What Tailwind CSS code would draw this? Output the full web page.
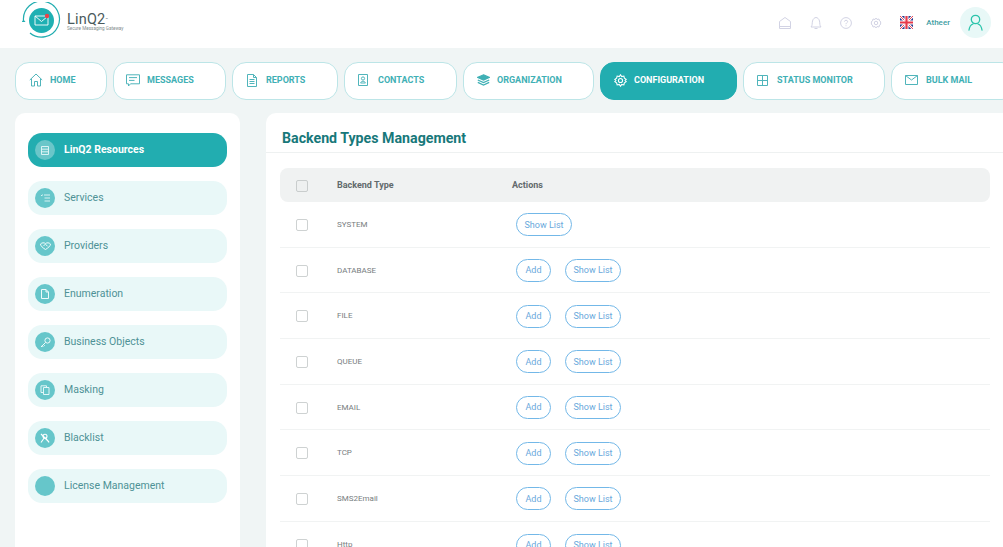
<!DOCTYPE html>
<html><head><meta charset="utf-8"><script src="https://cdn.jsdelivr.net/npm/@tailwindcss/browser@4"></script></head>
<body class="m-0">
<div class="w-[1003px] h-[547px] overflow-hidden bg-[#f0f5f5] font-['Roboto',sans-serif]">
<header class="h-[48px] bg-white flex items-center relative">
  <div class="flex items-center ml-[22px] -mt-[4px]">
    <svg width="40" height="40" viewBox="0 0 40 40" class="shrink-0">
      <path d="M1.5 18.5 A18 18 0 1 1 8 31" fill="none" stroke="#22adb0" stroke-width="1.2"/>
      <path d="M-0.5 20 L1.5 17.5 L3.5 20 Z" fill="#22adb0"/>
      <circle cx="19.5" cy="18.5" r="12.5" fill="#1fb0b3"/>
      <path d="M13 14 H26 V23 H13 Z M13 14 L19.5 19.5 L26 14" fill="none" stroke="#fff" stroke-width="0.9"/>
      <circle cx="25" cy="14" r="2.2" fill="#e8434a"/>
    </svg>
    <div class="ml-[5px] relative">
      <div class="text-[14.5px] leading-[16px] text-[#4a5a5c] tracking-[0.2px]">LinQ2<span class="text-[4px] align-top">™</span></div>
      <div class="text-[4.6px] leading-[6px] -mt-[2px] text-[#7f8c8d]">Secure Messaging Gateway</div>
    </div>
  </div>
  <div class="ml-auto flex items-center mr-[12px] -mt-[3px]">
    <svg width="14" height="14" viewBox="0 0 14 14" fill="none" stroke="#d2d3e4" stroke-width="1"><path d="M1.5 12.5 V5.5 L7 1.5 L12.5 5.5 V12.5 Z M1.5 10.5 H12.5"/></svg>
    <svg class="ml-[18px]" width="12" height="14" viewBox="0 0 12 14" fill="none" stroke="#d2d3e4" stroke-width="1"><path d="M1 11 C2.5 9.5 2 7.5 2.5 5 C3 3 4.5 1.5 6 1.5 C7.5 1.5 9 3 9.5 5 C10 7.5 9.5 9.5 11 11 Z M4.5 12.5 H7.5"/></svg>
    <svg class="ml-[18px]" width="12" height="12" viewBox="0 0 12 12" fill="none" stroke="#d2d3e4" stroke-width="1"><circle cx="6" cy="6" r="5.4"/><path d="M4.4 4.6 C4.5 2.8 7.6 2.8 7.6 4.6 C7.6 5.8 6 5.8 6 7.2 M6 8.3 V9.2"/></svg>
    <svg class="ml-[18px]" width="12" height="12" viewBox="0 0 24 24" fill="none" stroke="#d2d3e4" stroke-width="2"><path d="M12 2 L14 5 L18 4 L19 8 L22 10 L20.5 12 L22 14 L19 16 L18 20 L14 19 L12 22 L10 19 L6 20 L5 16 L2 14 L3.5 12 L2 10 L5 8 L6 4 L10 5 Z"/><circle cx="12" cy="12" r="3.5"/></svg>
    <svg class="ml-[18px]" width="13" height="13" viewBox="0 0 13 13"><rect width="13" height="13" fill="#2b3a8c"/><path d="M0 0 L13 13 M13 0 L0 13" stroke="#fff" stroke-width="2.4"/><path d="M0 0 L13 13 M13 0 L0 13" stroke="#e6394a" stroke-width="0.9"/><path d="M6.5 0 V13 M0 6.5 H13" stroke="#fff" stroke-width="4"/><path d="M6.5 0 V13 M0 6.5 H13" stroke="#e6394a" stroke-width="2.2"/></svg>
    <span class="ml-[13px] text-[8px] font-medium text-[#3f9da3]">Atheer</span>
    <div class="ml-[10px] w-[31px] h-[31px] rounded-full bg-[#e8f8f7] flex items-center justify-center">
      <svg width="15" height="17" viewBox="0 0 15 17" fill="none" stroke="#2bc4ab" stroke-width="1.3" stroke-linecap="round"><circle cx="7.5" cy="5.5" r="4.2"/><path d="M1 16 C1.5 12.5 3.5 10.5 5 10 M14 16 C13.5 12.5 11.5 10.5 10 10"/></svg>
    </div>
  </div>
</header>

<nav class="flex gap-[6px] pl-[15px] pt-[14px] text-[9px] font-bold w-[1100px]">
  <div class="w-[92px] h-[38px] shrink-0 rounded-[14px] border border-[#bce5e7] bg-white text-[#3fb0b5] flex items-center pl-[13px]">
    <svg class="shrink-0 -translate-y-[1px]" width="14" height="14" viewBox="0 0 14 14" fill="none" stroke="#50b5bb" stroke-width="1"><path d="M0.8 7 L7 1 L13.2 7 M2.5 5.8 V13 H5.5 V8.5 H8.5 V13 H11.5 V5.8"/></svg>
    <span class="ml-[7px]">HOME</span>
  </div>
  <div class="w-[113px] h-[38px] shrink-0 rounded-[14px] border border-[#bce5e7] bg-white text-[#3fb0b5] flex items-center pl-[12px]">
    <svg class="shrink-0 -translate-y-[1px]" width="14" height="13" viewBox="0 0 14 13" fill="none" stroke="#50b5bb" stroke-width="1"><path d="M0.5 0.8 H13.5 V9.8 H4.5 L2.5 12 V9.8 H0.5 Z M3 3.6 H11 M3 6.4 H8.5"/></svg>
    <span class="ml-[7px]">MESSAGES</span>
  </div>
  <div class="w-[106px] h-[38px] shrink-0 rounded-[14px] border border-[#bce5e7] bg-white text-[#3fb0b5] flex items-center pl-[14px]">
    <svg class="shrink-0 -translate-y-[1px]" width="10" height="13" viewBox="0 0 10 13" fill="none" stroke="#50b5bb" stroke-width="1"><path d="M0.5 0.5 H6.5 L9.5 3.5 V12.5 H0.5 Z M6.5 0.5 V3.5 H9.5 M2.5 5.5 H7.5 M2.5 7.5 H7.5 M2.5 9.5 H7.5"/></svg>
    <span class="ml-[9px]">REPORTS</span>
  </div>
  <div class="w-[113px] h-[38px] shrink-0 rounded-[14px] border border-[#bce5e7] bg-white text-[#3fb0b5] flex items-center pl-[13px]">
    <svg class="shrink-0 -translate-y-[1px]" width="10" height="12" viewBox="0 0 10 12" fill="none" stroke="#50b5bb" stroke-width="1"><path d="M0.5 0.5 H9.5 V11.5 H0.5 Z"/><circle cx="5" cy="4.5" r="1.6"/><path d="M2.6 9 C3 6.8 7 6.8 7.4 9 Z"/></svg>
    <span class="ml-[10px]">CONTACTS</span>
  </div>
  <div class="w-[131px] h-[38px] shrink-0 rounded-[14px] border border-[#bce5e7] bg-white text-[#3fb0b5] flex items-center pl-[13px]">
    <svg class="shrink-0 -translate-y-[1px]" width="13" height="12" viewBox="0 0 13 12" fill="none" stroke="#3fb0b5" stroke-width="1.2"><path d="M6.5 0.8 L12.2 3.4 L6.5 6 L0.8 3.4 Z" fill="#3fb0b5"/><path d="M0.8 6 L6.5 8.6 L12.2 6 M0.8 8.4 L6.5 11 L12.2 8.4"/></svg>
    <span class="ml-[7px]">ORGANIZATION</span>
  </div>
  <div class="w-[137px] h-[38px] shrink-0 rounded-[14px] border border-[#22adb0] bg-[#22adb0] text-white flex items-center pl-[13px]">
    <svg class="shrink-0 -translate-y-[1px]" width="13" height="13" viewBox="0 0 24 24" fill="none" stroke="#fff" stroke-width="2"><path d="M12 1.5 L14.2 4.8 L18.2 3.8 L19.2 7.8 L22.5 10 L20.5 12 L22.5 14 L19.2 16.2 L18.2 20.2 L14.2 19.2 L12 22.5 L9.8 19.2 L5.8 20.2 L4.8 16.2 L1.5 14 L3.5 12 L1.5 10 L4.8 7.8 L5.8 3.8 L9.8 4.8 Z"/><circle cx="12" cy="12" r="3.8"/></svg>
    <span class="ml-[7px]">CONFIGURATION</span>
  </div>
  <div class="w-[142px] h-[38px] shrink-0 rounded-[14px] border border-[#bce5e7] bg-white text-[#3fb0b5] flex items-center pl-[13px]">
    <svg class="shrink-0 -translate-y-[1px]" width="11" height="11" viewBox="0 0 11 11" fill="none" stroke="#50b5bb" stroke-width="1"><path d="M0.5 0.5 H10.5 V10.5 H0.5 Z M5.5 0.5 V10.5 M0.5 5.5 H10.5"/></svg>
    <span class="ml-[9px]">STATUS MONITOR</span>
  </div>
  <div class="w-[125px] h-[38px] shrink-0 rounded-[14px] border border-[#bce5e7] bg-white text-[#3fb0b5] flex items-center pl-[13px]">
    <svg class="shrink-0 -translate-y-[1px]" width="13" height="10" viewBox="0 0 13 10" fill="none" stroke="#50b5bb" stroke-width="1"><path d="M0.5 0.5 H12.5 V9.5 H0.5 Z M0.5 0.5 L6.5 5 L12.5 0.5"/></svg>
    <span class="ml-[8px]">BULK MAIL</span>
  </div>
</nav>

<div class="flex mt-[13px] pl-[15px]">
  <aside class="w-[225px] h-[440px] shrink-0 bg-white rounded-t-[10px] pt-[20px] pl-[13px]">
    <div class="flex flex-col gap-[14px] w-[199px] text-[10.5px] text-[#4e9296]">
      <div class="h-[34px] rounded-[14px] bg-[#22adb0] flex items-center pl-[7px] text-white font-bold">
        <span class="w-[20px] h-[20px] rounded-full bg-[#6ac6c9] flex items-center justify-center"><svg width="8" height="9" viewBox="0 0 8 9" fill="none" stroke="#e6f7f7" stroke-width="0.9"><path d="M0.5 0.5 H7.5 V8.5 H0.5 Z M0.5 3.2 H7.5 M0.5 5.8 H7.5"/></svg></span>
        <span class="ml-[9px] -translate-y-[0.5px]">LinQ2 Resources</span>
      </div>
      <div class="h-[34px] rounded-[14px] bg-[#e9f8f8] flex items-center pl-[7px]">
        <span class="w-[20px] h-[20px] rounded-full bg-[#66c6ca] flex items-center justify-center"><svg width="9" height="8" viewBox="0 0 9 8" fill="none" stroke="#e6f7f7" stroke-width="0.9"><path d="M3 1 H9 M3.5 4 H9 M3.5 7 H9 M0 2 L1.2 0.8 L2 1.5"/></svg></span>
        <span class="ml-[9px] -translate-y-[0.5px]">Services</span>
      </div>
      <div class="h-[34px] rounded-[14px] bg-[#e9f8f8] flex items-center pl-[7px]">
        <span class="w-[20px] h-[20px] rounded-full bg-[#66c6ca] flex items-center justify-center"><svg width="11" height="8" viewBox="0 0 11 8" fill="none" stroke="#eefafa" stroke-width="1"><path d="M0.5 2 C2 0.5 4 0.5 5.5 1.5 C7 0.5 9 0.5 10.5 2 C10.5 4 8 6 5.5 7.5 C3 6 0.5 4 0.5 2 Z M3.5 3.5 L5.5 2.5 L7.5 4"/></svg></span>
        <span class="ml-[9px] -translate-y-[0.5px]">Providers</span>
      </div>
      <div class="h-[34px] rounded-[14px] bg-[#e9f8f8] flex items-center pl-[7px]">
        <span class="w-[20px] h-[20px] rounded-full bg-[#66c6ca] flex items-center justify-center"><svg width="8" height="10" viewBox="0 0 8 10" fill="none" stroke="#eefafa" stroke-width="1"><path d="M0.5 0.5 H5 L7.5 3 V9.5 H0.5 Z M5 0.5 V3 H7.5"/></svg></span>
        <span class="ml-[9px] -translate-y-[0.5px]">Enumeration</span>
      </div>
      <div class="h-[34px] rounded-[14px] bg-[#e9f8f8] flex items-center pl-[7px]">
        <span class="w-[20px] h-[20px] rounded-full bg-[#66c6ca] flex items-center justify-center"><svg width="11" height="11" viewBox="0 0 11 11" fill="none" stroke="#eefafa" stroke-width="1"><circle cx="7.5" cy="3.5" r="2.6"/><path d="M5.6 5.4 L1 10 M2.2 8.8 L3.4 10 M3.5 7.5 L4.7 8.7"/></svg></span>
        <span class="ml-[9px] -translate-y-[0.5px]">Business Objects</span>
      </div>
      <div class="h-[34px] rounded-[14px] bg-[#e9f8f8] flex items-center pl-[7px]">
        <span class="w-[20px] h-[20px] rounded-full bg-[#66c6ca] flex items-center justify-center"><svg width="10" height="10" viewBox="0 0 10 10" fill="none" stroke="#eefafa" stroke-width="0.9"><path d="M3.5 2.5 H9 V9.5 H3.5 Z M3.5 7.5 H1 V0.8 H6.5 V2.5"/></svg></span>
        <span class="ml-[9px] -translate-y-[0.5px]">Masking</span>
      </div>
      <div class="h-[34px] rounded-[14px] bg-[#e9f8f8] flex items-center pl-[7px]">
        <span class="w-[20px] h-[20px] rounded-full bg-[#66c6ca] flex items-center justify-center"><svg width="10" height="10" viewBox="0 0 10 10" fill="none" stroke="#fff" stroke-width="1.1"><circle cx="5" cy="3.2" r="2"/><path d="M1 9.5 L4 5.2 M9 9.5 L6 5.2 M1 1 L9 9"/></svg></span>
        <span class="ml-[9px] -translate-y-[0.5px]">Blacklist</span>
      </div>
      <div class="h-[34px] rounded-[14px] bg-[#e9f8f8] flex items-center pl-[7px]">
        <span class="w-[20px] h-[20px] rounded-full bg-[#66c6ca]"></span>
        <span class="ml-[9px] -translate-y-[0.5px]">License Management</span>
      </div>
    </div>
  </aside>

  <main class="ml-[26px] w-[737px] h-[440px] shrink-0 bg-white rounded-tl-[10px]">
    <div class="h-[40px] border-b border-[#eef1f1] pl-[16px] flex items-center">
      <h1 class="text-[14.2px] font-bold text-[#17787a] mt-[12px]">Backend Types Management</h1>
    </div>
    <div class="ml-[14px] w-[710px] mt-[15px]">
      <div class="h-[34px] pt-[1px] bg-[#f0f2f2] rounded-[8px] flex items-center text-[9px] font-bold text-[#626a6c]">
        <span class="ml-[16px] w-[12px] h-[12px] rounded-[2px] border border-[#c9cdcd] bg-[#eef0f0] shrink-0"></span>
        <span class="ml-[29px] w-[175px]">Backend Type</span><span>Actions</span>
      </div>
      <div class="text-[8px] text-[#777d80]">
        <div class="h-[45.7px] pt-[1px] border-b border-[#f1f3f3] flex items-center">
          <span class="ml-[16px] w-[12px] h-[12px] rounded-[2px] border border-[#ced2d2] shrink-0"></span>
          <span class="ml-[29px] w-[179px]">SYSTEM</span>
          <span class="h-[23px] w-[56px] pt-[1px] rounded-full border border-[#73b8e8] text-[#6aa9dc] text-[9px] flex items-center justify-center">Show List</span>
        </div>
        <div class="h-[45.7px] pt-[1px] border-b border-[#f1f3f3] flex items-center">
          <span class="ml-[16px] w-[12px] h-[12px] rounded-[2px] border border-[#ced2d2] shrink-0"></span>
          <span class="ml-[29px] w-[179px]">DATABASE</span>
          <span class="h-[23px] w-[35px] pt-[1px] rounded-full border border-[#73b8e8] text-[#6aa9dc] text-[9px] flex items-center justify-center">Add</span>
          <span class="ml-[14px] h-[23px] w-[56px] pt-[1px] rounded-full border border-[#73b8e8] text-[#6aa9dc] text-[9px] flex items-center justify-center">Show List</span>
        </div>
        <div class="h-[45.7px] pt-[1px] border-b border-[#f1f3f3] flex items-center">
          <span class="ml-[16px] w-[12px] h-[12px] rounded-[2px] border border-[#ced2d2] shrink-0"></span>
          <span class="ml-[29px] w-[179px]">FILE</span>
          <span class="h-[23px] w-[35px] pt-[1px] rounded-full border border-[#73b8e8] text-[#6aa9dc] text-[9px] flex items-center justify-center">Add</span>
          <span class="ml-[14px] h-[23px] w-[56px] pt-[1px] rounded-full border border-[#73b8e8] text-[#6aa9dc] text-[9px] flex items-center justify-center">Show List</span>
        </div>
        <div class="h-[45.7px] pt-[1px] border-b border-[#f1f3f3] flex items-center">
          <span class="ml-[16px] w-[12px] h-[12px] rounded-[2px] border border-[#ced2d2] shrink-0"></span>
          <span class="ml-[29px] w-[179px]">QUEUE</span>
          <span class="h-[23px] w-[35px] pt-[1px] rounded-full border border-[#73b8e8] text-[#6aa9dc] text-[9px] flex items-center justify-center">Add</span>
          <span class="ml-[14px] h-[23px] w-[56px] pt-[1px] rounded-full border border-[#73b8e8] text-[#6aa9dc] text-[9px] flex items-center justify-center">Show List</span>
        </div>
        <div class="h-[45.7px] pt-[1px] border-b border-[#f1f3f3] flex items-center">
          <span class="ml-[16px] w-[12px] h-[12px] rounded-[2px] border border-[#ced2d2] shrink-0"></span>
          <span class="ml-[29px] w-[179px]">EMAIL</span>
          <span class="h-[23px] w-[35px] pt-[1px] rounded-full border border-[#73b8e8] text-[#6aa9dc] text-[9px] flex items-center justify-center">Add</span>
          <span class="ml-[14px] h-[23px] w-[56px] pt-[1px] rounded-full border border-[#73b8e8] text-[#6aa9dc] text-[9px] flex items-center justify-center">Show List</span>
        </div>
        <div class="h-[45.7px] pt-[1px] border-b border-[#f1f3f3] flex items-center">
          <span class="ml-[16px] w-[12px] h-[12px] rounded-[2px] border border-[#ced2d2] shrink-0"></span>
          <span class="ml-[29px] w-[179px]">TCP</span>
          <span class="h-[23px] w-[35px] pt-[1px] rounded-full border border-[#73b8e8] text-[#6aa9dc] text-[9px] flex items-center justify-center">Add</span>
          <span class="ml-[14px] h-[23px] w-[56px] pt-[1px] rounded-full border border-[#73b8e8] text-[#6aa9dc] text-[9px] flex items-center justify-center">Show List</span>
        </div>
        <div class="h-[45.7px] pt-[1px] border-b border-[#f1f3f3] flex items-center">
          <span class="ml-[16px] w-[12px] h-[12px] rounded-[2px] border border-[#ced2d2] shrink-0"></span>
          <span class="ml-[29px] w-[179px]">SMS2Email</span>
          <span class="h-[23px] w-[35px] pt-[1px] rounded-full border border-[#73b8e8] text-[#6aa9dc] text-[9px] flex items-center justify-center">Add</span>
          <span class="ml-[14px] h-[23px] w-[56px] pt-[1px] rounded-full border border-[#73b8e8] text-[#6aa9dc] text-[9px] flex items-center justify-center">Show List</span>
        </div>
        <div class="h-[45.7px] pt-[1px] flex items-center">
          <span class="ml-[16px] w-[12px] h-[12px] rounded-[2px] border border-[#ced2d2] shrink-0"></span>
          <span class="ml-[29px] w-[179px]">Http</span>
          <span class="h-[23px] w-[35px] pt-[1px] rounded-full border border-[#73b8e8] text-[#6aa9dc] text-[9px] flex items-center justify-center">Add</span>
          <span class="ml-[14px] h-[23px] w-[56px] pt-[1px] rounded-full border border-[#73b8e8] text-[#6aa9dc] text-[9px] flex items-center justify-center">Show List</span>
        </div>
      </div>
    </div>
  </main>
</div>
</div>
</body></html>
